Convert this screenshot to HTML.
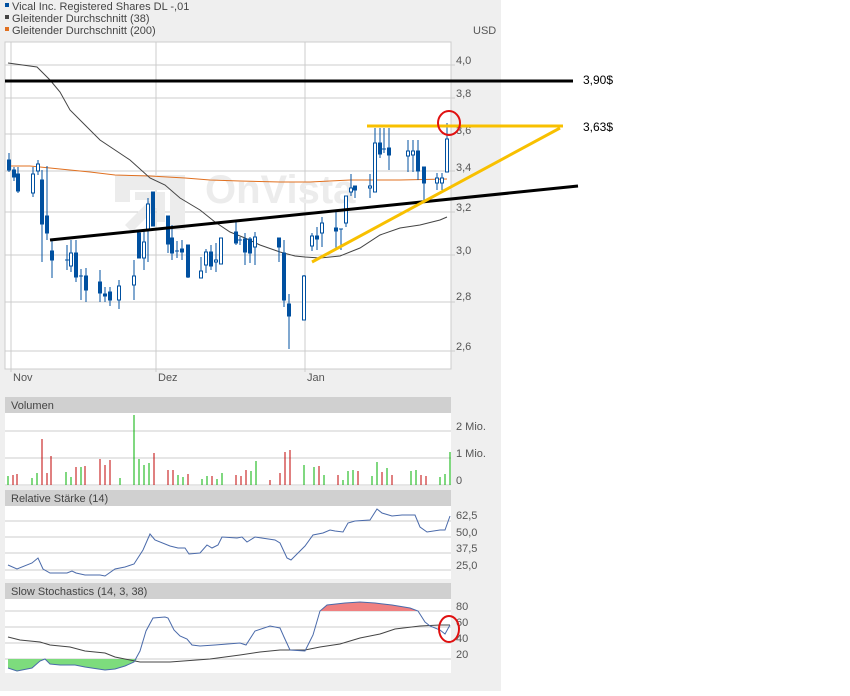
<!DOCTYPE html>
<html><head><meta charset="utf-8"><style>
html,body{margin:0;padding:0;background:#fff}
body{width:850px;height:691px;overflow:hidden;font-family:"Liberation Sans",sans-serif}
</style></head><body>
<svg width="850" height="691" xmlns="http://www.w3.org/2000/svg" font-family="Liberation Sans, sans-serif">
<rect x="0" y="0" width="501" height="691" fill="#efefef"/>
<rect x="5" y="3" width="4" height="4" fill="#0050a0"/>
<text x="12" y="10" font-size="11" fill="#444">Vical Inc. Registered Shares DL -,01</text>
<rect x="5" y="15" width="4" height="4" fill="#444"/>
<text x="12" y="22" font-size="11" fill="#444">Gleitender Durchschnitt (38)</text>
<rect x="5" y="27" width="4" height="4" fill="#e07020"/>
<text x="12" y="34" font-size="11" fill="#444">Gleitender Durchschnitt (200)</text>
<text x="473" y="34" font-size="11" fill="#555">USD</text>
<rect x="5" y="42" width="446" height="327" fill="#fff" stroke="#ccc"/>
<g stroke="#ccc" stroke-width="1">
<line x1="5" y1="65" x2="455" y2="65"/><line x1="5" y1="98" x2="455" y2="98"/><line x1="5" y1="134" x2="455" y2="134"/><line x1="5" y1="171" x2="455" y2="171"/><line x1="5" y1="212" x2="455" y2="212"/><line x1="5" y1="255" x2="455" y2="255"/><line x1="5" y1="302" x2="455" y2="302"/><line x1="5" y1="351" x2="455" y2="351"/>
<line x1="11" y1="42" x2="11" y2="372"/><line x1="156" y1="42" x2="156" y2="372"/><line x1="305" y1="42" x2="305" y2="372"/>
</g>
<g font-size="11" fill="#555">
<text x="456" y="64">4,0</text><text x="456" y="97">3,8</text><text x="456" y="134">3,6</text><text x="456" y="171">3,4</text><text x="456" y="211">3,2</text><text x="456" y="254">3,0</text><text x="456" y="300">2,8</text><text x="456" y="350">2,6</text>
<text x="13" y="381">Nov</text><text x="158" y="381">Dez</text><text x="307" y="381">Jan</text>
</g>
<g fill="#ececec">
<path d="M115 175 h70 v55 h-15 v-40 h-40 v12 h-15z"/>
<path d="M125 225 l25 -25 h-15 v-8 h30 v30 h-8 v-15 l-25 25z"/>
<text x="205" y="203" font-size="40" font-weight="bold">OnVista</text>
</g>
<polyline fill="none" stroke="#e07020" stroke-width="1" points="8,166 30,166 60,169 90,172 115,175 150,176 185,178 210,180 240,181 280,182 310,182 350,180 400,180 447,179"/>
<polyline fill="none" stroke="#444" stroke-width="1" points="8,63 37,67 50,80 60,92 70,110 85,125 100,140 115,150 130,160 150,178 165,185 180,198 200,210 215,222 230,232 245,238 260,245 280,252 295,256 305,257 320,258 340,256 360,248 380,235 400,228 420,225 440,220 447,217"/>
<g stroke="#0050a0" stroke-width="1" fill="#0050a0">
<line x1="9" y1="153" x2="9" y2="172"/><rect x="7.5" y="160" width="3" height="10"/>
<line x1="14" y1="167" x2="14" y2="181"/><rect x="12.5" y="170" width="3" height="7"/>
<line x1="18" y1="167" x2="18" y2="193"/><rect x="16.5" y="174" width="3" height="17"/>
<line x1="33" y1="167" x2="33" y2="197"/><rect x="31.5" y="174" width="3" height="19" fill="#fff"/>
<line x1="38" y1="160" x2="38" y2="175"/><rect x="36.5" y="164" width="3" height="7" fill="#fff"/>
<line x1="42" y1="170" x2="42" y2="262"/><rect x="40.5" y="180" width="3" height="44"/>
<line x1="47" y1="166" x2="47" y2="240"/><rect x="45.5" y="216" width="3" height="17"/>
<line x1="52" y1="240" x2="52" y2="278"/><rect x="50.5" y="251" width="3" height="9"/>
<line x1="67" y1="245" x2="67" y2="270"/><line x1="65" y1="260" x2="69" y2="260"/>
<line x1="71" y1="240" x2="71" y2="272"/><rect x="69.5" y="253" width="3" height="13" fill="#fff"/>
<line x1="76" y1="240" x2="76" y2="282"/><rect x="74.5" y="253" width="3" height="24"/>
<line x1="81" y1="269" x2="81" y2="300"/><line x1="79" y1="276" x2="83" y2="276"/>
<line x1="86" y1="268" x2="86" y2="302"/><rect x="84.5" y="276" width="3" height="14"/>
<line x1="100" y1="270" x2="100" y2="302"/><rect x="98.5" y="282" width="3" height="11"/>
<line x1="105" y1="287" x2="105" y2="302"/><rect x="103.5" y="294" width="3" height="2"/>
<line x1="110" y1="287" x2="110" y2="306"/><rect x="108.5" y="292" width="3" height="8"/>
<line x1="119" y1="280" x2="119" y2="309"/><rect x="117.5" y="286" width="3" height="14" fill="#fff"/>
<line x1="134" y1="260" x2="134" y2="300"/><rect x="132.5" y="276" width="3" height="9" fill="#fff"/>
<line x1="139" y1="230" x2="139" y2="258"/><rect x="137.5" y="233" width="3" height="25"/>
<line x1="144" y1="230" x2="144" y2="270"/><rect x="142.5" y="242" width="3" height="16" fill="#fff"/>
<line x1="148" y1="198" x2="148" y2="262"/><rect x="146.5" y="204" width="3" height="26" fill="#fff"/>
<line x1="153" y1="192" x2="153" y2="226"/><rect x="151.5" y="192" width="3" height="34"/>
<line x1="168" y1="216" x2="168" y2="253"/><rect x="166.5" y="216" width="3" height="28"/>
<line x1="172" y1="225" x2="172" y2="260"/><rect x="170.5" y="238" width="3" height="15"/>
<line x1="177" y1="241" x2="177" y2="258"/><line x1="175" y1="251" x2="179" y2="251"/>
<line x1="182" y1="240" x2="182" y2="260"/><rect x="180.5" y="249" width="3" height="3"/>
<line x1="188" y1="245" x2="188" y2="278"/><rect x="186.5" y="245" width="3" height="32"/>
<line x1="201" y1="257" x2="201" y2="278"/><rect x="199.5" y="271" width="3" height="7" fill="#fff"/>
<line x1="206" y1="249" x2="206" y2="273"/><rect x="204.5" y="252" width="3" height="13" fill="#fff"/>
<line x1="211" y1="245" x2="211" y2="270"/><rect x="209.5" y="252" width="3" height="14"/>
<line x1="216" y1="243" x2="216" y2="272"/><rect x="214.5" y="260" width="3" height="2" fill="#fff"/>
<line x1="221" y1="238" x2="221" y2="264"/><rect x="219.5" y="238" width="3" height="26" fill="#fff"/>
<line x1="236" y1="222" x2="236" y2="245"/><rect x="234.5" y="232" width="3" height="11"/>
<line x1="240" y1="237" x2="240" y2="245"/><line x1="238" y1="240" x2="242" y2="240"/>
<line x1="245" y1="233" x2="245" y2="265"/><rect x="243.5" y="239" width="3" height="13"/>
<line x1="250" y1="237" x2="250" y2="263"/><rect x="248.5" y="239" width="3" height="14"/>
<line x1="255" y1="232" x2="255" y2="265"/><rect x="253.5" y="237" width="3" height="10" fill="#fff"/>
<line x1="279" y1="238" x2="279" y2="262"/><rect x="277.5" y="238" width="3" height="9"/>
<line x1="284" y1="240" x2="284" y2="307"/><rect x="282.5" y="253" width="3" height="47"/>
<line x1="289" y1="294" x2="289" y2="349"/><rect x="287.5" y="304" width="3" height="12"/>
<line x1="304" y1="275" x2="304" y2="320"/><rect x="302.5" y="276" width="3" height="44" fill="#fff"/>
<line x1="312" y1="233" x2="312" y2="251"/><rect x="310.5" y="236" width="3" height="10" fill="#fff"/>
<line x1="317" y1="227" x2="317" y2="250"/><rect x="315.5" y="236" width="3" height="3"/>
<line x1="322" y1="217" x2="322" y2="247"/><rect x="320.5" y="223" width="3" height="10" fill="#fff"/>
<line x1="336" y1="212" x2="336" y2="250"/><rect x="334.5" y="228" width="3" height="3"/>
<line x1="341" y1="229" x2="341" y2="250"/><line x1="339" y1="229" x2="343" y2="229"/>
<line x1="346" y1="196" x2="346" y2="227"/><rect x="344.5" y="196" width="3" height="27" fill="#fff"/>
<line x1="351" y1="174" x2="351" y2="196"/><rect x="349.5" y="188" width="3" height="4" fill="#fff"/>
<line x1="355" y1="186" x2="355" y2="198"/><rect x="353.5" y="186" width="3" height="4"/>
<line x1="370" y1="174" x2="370" y2="198"/><rect x="368.5" y="186" width="3" height="2" fill="#fff"/>
<line x1="375" y1="128" x2="375" y2="192"/><rect x="373.5" y="143" width="3" height="49" fill="#fff"/>
<line x1="380" y1="128" x2="380" y2="158"/><rect x="378.5" y="143" width="3" height="11"/>
<line x1="384" y1="128" x2="384" y2="153"/><line x1="382" y1="149" x2="386" y2="149"/>
<line x1="389" y1="128" x2="389" y2="170"/><rect x="387.5" y="148" width="3" height="7"/>
<line x1="408" y1="140" x2="408" y2="172"/><rect x="406.5" y="151" width="3" height="5" fill="#fff"/>
<line x1="413" y1="140" x2="413" y2="172"/><rect x="411.5" y="151" width="3" height="4" fill="#fff"/>
<line x1="418" y1="140" x2="418" y2="180"/><rect x="416.5" y="151" width="3" height="20"/>
<line x1="424" y1="167" x2="424" y2="200"/><rect x="422.5" y="167" width="3" height="16"/>
<line x1="437" y1="173" x2="437" y2="190"/><rect x="435.5" y="178" width="3" height="5" fill="#fff"/>
<line x1="442" y1="173" x2="442" y2="190"/><rect x="440.5" y="178" width="3" height="5" fill="#fff"/>
<line x1="447" y1="123" x2="447" y2="172"/><rect x="445.5" y="139" width="3" height="33" fill="#fff"/>
</g>
<line x1="5" y1="81" x2="573" y2="81" stroke="#000" stroke-width="3"/>
<line x1="50" y1="240" x2="578" y2="186" stroke="#000" stroke-width="3"/>
<line x1="367" y1="126" x2="563" y2="126" stroke="#f8c000" stroke-width="3"/>
<line x1="312" y1="262" x2="560" y2="128" stroke="#f8c000" stroke-width="3"/>
<ellipse cx="449" cy="123" rx="11" ry="12" fill="none" stroke="#e01010" stroke-width="2"/>
<text x="583" y="84" font-size="12" fill="#000">3,90$</text>
<text x="583" y="131" font-size="12" fill="#000">3,63$</text>
<rect x="5" y="397" width="446" height="16" fill="#d0d0d0"/>
<text x="11" y="409" font-size="11" fill="#444">Volumen</text>
<rect x="5" y="413" width="446" height="73" fill="#fff"/>
<g stroke="#ccc"><line x1="5" y1="431" x2="451" y2="431"/><line x1="5" y1="458" x2="451" y2="458"/><line x1="5" y1="485" x2="451" y2="485"/></g>
<g font-size="11" fill="#555"><text x="456" y="430">2 Mio.</text><text x="456" y="457">1 Mio.</text><text x="456" y="484">0</text></g>
<g stroke-width="1">
<g stroke="#00b000"><line x1="8" y1="476" x2="8" y2="485"/><line x1="32" y1="478" x2="32" y2="485"/><line x1="37" y1="473" x2="37" y2="485"/><line x1="66" y1="472" x2="66" y2="485"/><line x1="71" y1="477" x2="71" y2="485"/><line x1="81" y1="467" x2="81" y2="485"/><line x1="120" y1="478" x2="120" y2="485"/><line x1="134" y1="415" x2="134" y2="485"/><line x1="139" y1="459" x2="139" y2="485"/><line x1="144" y1="465" x2="144" y2="485"/><line x1="149" y1="463" x2="149" y2="485"/><line x1="178" y1="475" x2="178" y2="485"/><line x1="183" y1="477" x2="183" y2="485"/><line x1="202" y1="479" x2="202" y2="485"/><line x1="207" y1="476" x2="207" y2="485"/><line x1="217" y1="479" x2="217" y2="485"/><line x1="222" y1="473" x2="222" y2="485"/><line x1="251" y1="471" x2="251" y2="485"/><line x1="256" y1="461" x2="256" y2="485"/><line x1="304" y1="465" x2="304" y2="485"/><line x1="314" y1="467" x2="314" y2="485"/><line x1="324" y1="475" x2="324" y2="485"/><line x1="343" y1="480" x2="343" y2="485"/><line x1="348" y1="471" x2="348" y2="485"/><line x1="353" y1="470" x2="353" y2="485"/><line x1="372" y1="476" x2="372" y2="485"/><line x1="377" y1="462" x2="377" y2="485"/><line x1="387" y1="468" x2="387" y2="485"/><line x1="411" y1="471" x2="411" y2="485"/><line x1="416" y1="470" x2="416" y2="485"/><line x1="440" y1="477" x2="440" y2="485"/><line x1="445" y1="474" x2="445" y2="485"/><line x1="450" y1="452" x2="450" y2="485"/></g>
<g stroke="#c00000"><line x1="13" y1="475" x2="13" y2="485"/><line x1="17" y1="474" x2="17" y2="485"/><line x1="42" y1="439" x2="42" y2="485"/><line x1="47" y1="473" x2="47" y2="485"/><line x1="51" y1="456" x2="51" y2="485"/><line x1="76" y1="467" x2="76" y2="485"/><line x1="85" y1="466" x2="85" y2="485"/><line x1="100" y1="459" x2="100" y2="485"/><line x1="105" y1="465" x2="105" y2="485"/><line x1="110" y1="460" x2="110" y2="485"/><line x1="154" y1="453" x2="154" y2="485"/><line x1="168" y1="470" x2="168" y2="485"/><line x1="173" y1="470" x2="173" y2="485"/><line x1="188" y1="474" x2="188" y2="485"/><line x1="212" y1="476" x2="212" y2="485"/><line x1="236" y1="475" x2="236" y2="485"/><line x1="241" y1="476" x2="241" y2="485"/><line x1="246" y1="470" x2="246" y2="485"/><line x1="270" y1="480" x2="270" y2="485"/><line x1="280" y1="473" x2="280" y2="485"/><line x1="285" y1="452" x2="285" y2="485"/><line x1="290" y1="450" x2="290" y2="485"/><line x1="319" y1="466" x2="319" y2="485"/><line x1="338" y1="475" x2="338" y2="485"/><line x1="358" y1="471" x2="358" y2="485"/><line x1="382" y1="472" x2="382" y2="485"/><line x1="392" y1="475" x2="392" y2="485"/><line x1="421" y1="475" x2="421" y2="485"/><line x1="426" y1="476" x2="426" y2="485"/></g>
</g>
<rect x="5" y="490" width="446" height="16" fill="#d0d0d0"/>
<text x="11" y="502" font-size="11" fill="#444">Relative Stärke (14)</text>
<rect x="5" y="506" width="446" height="73" fill="#fff"/>
<g stroke="#ccc"><line x1="5" y1="521" x2="451" y2="521"/><line x1="5" y1="537" x2="451" y2="537"/><line x1="5" y1="553" x2="451" y2="553"/><line x1="5" y1="570" x2="451" y2="570"/></g>
<g font-size="11" fill="#555"><text x="456" y="519">62,5</text><text x="456" y="536">50,0</text><text x="456" y="552">37,5</text><text x="456" y="569">25,0</text></g>
<polyline fill="none" stroke="#4a6aaa" stroke-width="1" points="8,565 17,569 32,563 38,558 43,569 50,573 60,573 67,573 72,571 76,573 85,575 100,575 105,576 115,569 125,567 134,564 143,550 150,534 155,540 170,546 178,548 185,548 189,554 200,553 207,545 212,548 218,545 222,537 237,538 242,537 247,542 255,537 275,540 280,543 287,558 291,560 300,551 305,546 313,535 323,533 330,530 335,531 343,532 348,523 355,521 370,520 377,509 382,513 392,516 402,515 415,515 420,527 427,532 440,530 445,530 450,516"/>
<rect x="5" y="583" width="446" height="16" fill="#d0d0d0"/>
<text x="11" y="595" font-size="11" fill="#444">Slow Stochastics (14, 3, 38)</text>
<rect x="5" y="599" width="446" height="74" fill="#fff"/>
<g stroke="#ccc"><line x1="5" y1="611" x2="451" y2="611"/><line x1="5" y1="627" x2="451" y2="627"/><line x1="5" y1="643" x2="451" y2="643"/><line x1="5" y1="659" x2="451" y2="659"/></g>
<g font-size="11" fill="#555"><text x="456" y="610">80</text><text x="456" y="626">60</text><text x="456" y="642">40</text><text x="456" y="658">20</text></g>
<polygon fill="#7ddc7d" points="8,659 8,668 17,671 32,668 40,661 45,659 50,664 60,665 75,665 85,667 105,670 115,669 125,666 134,662 137,659"/>
<polygon fill="#f08080" points="320,611 327,605 345,603 360,602 375,603 392,605 410,608 418,611"/>
<polyline fill="none" stroke="#444" stroke-width="1" points="8,637 20,640 40,642 50,645 70,647 85,651 105,653 115,657 130,660 140,662 150,662 170,662 210,659 240,655 260,652 280,650 305,650 320,647 340,644 360,638 380,634 395,629 420,626 440,625 450,625"/>
<polyline fill="none" stroke="#4a6aaa" stroke-width="1" points="8,668 17,671 32,668 40,661 45,659 50,664 60,665 75,665 85,667 105,670 115,669 125,666 134,662 140,651 146,631 153,618 165,617 168,618 174,630 180,636 187,639 192,645 200,646 215,645 240,643 246,645 255,631 270,626 280,628 284,637 290,650 305,651 313,635 320,611 327,605 345,603 360,602 375,603 392,605 410,608 418,611 425,622 430,626 440,630 445,634 450,625"/>
<ellipse cx="449" cy="629" rx="10" ry="13" fill="none" stroke="#e01010" stroke-width="2"/>
</svg>
</body></html>
